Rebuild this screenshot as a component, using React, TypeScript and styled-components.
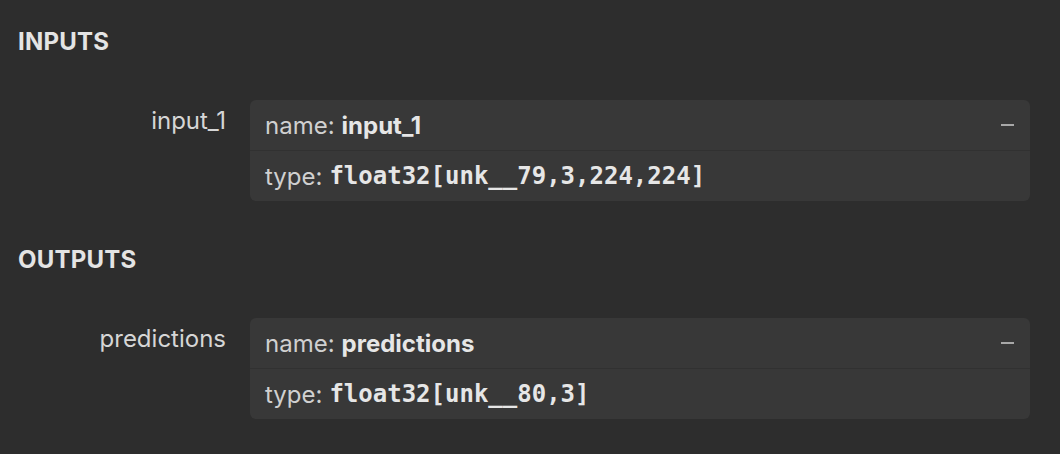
import styled, { createGlobalStyle } from "styled-components"

const GlobalStyle = createGlobalStyle`
	html, body {
		margin: 0;
		padding: 0;
		background: #2d2d2d;
	}
	body {
		font-family: Inter, "Noto Sans", sans-serif;
		color: #dcdcdc;
	}
`

const Sidebar = styled.div`
	width: 1060px;
	height: 454px;
	box-sizing: border-box;
	padding: 28px 30px 0 18px;
	background: #2d2d2d;
`

const SectionTitle = styled.h2`
	margin: 0;
	font-size: 24px;
	font-weight: 700;
	line-height: 28px;
	letter-spacing: 0.2px;
	color: #e4e4e4;
`

const Section = styled.section`
	margin-bottom: 45px;
`

const Row = styled.div`
	display: grid;
	grid-template-columns: 208px 1fr;
	column-gap: 24px;
	margin-top: 44px;
`

const Label = styled.div`
	text-align: right;
	font-size: 24px;
	line-height: 50px;
	color: #d6d6d6;
	margin-top: -4px;
`

const Card = styled.div`
	background: #383838;
	border-radius: 6px;
	overflow: hidden;
`

const Line = styled.div<{ $first?: boolean }>`
	display: flex;
	align-items: center;
	height: 50px;
	padding: 0 15px;
	font-size: 24px;
	color: #d0d0d0;
	border-top: ${(p) => (p.$first ? "none" : "1px solid #313131")};
`

const Key = styled.span`
	margin-right: 7px;
`

const Value = styled.span`
	font-weight: 700;
	color: #e6e6e6;
`

const Mono = styled.span`
	font-family: "DejaVu Sans Mono", monospace;
	font-weight: 700;
	font-size: 24px;
	color: #e6e6e6;
`

const Collapse = styled.span`
	margin-left: auto;
	width: 13px;
	height: 2px;
	background: #a8a8a8;
	margin-right: 1px;
`

type Arg = { label: string; name: string; type: string }

const Argument = ({ arg }: { arg: Arg }) => (
	<Row>
		<Label>{arg.label}</Label>
		<Card>
			<Line $first>
				<Key>name:</Key>
				<Value>{arg.name}</Value>
				<Collapse />
			</Line>
			<Line>
				<Key>type:</Key>
				<Mono>{arg.type}</Mono>
			</Line>
		</Card>
	</Row>
)

const sections = [
	{
		title: "INPUTS",
		args: [{ label: "input_1", name: "input_1", type: "float32[unk__79,3,224,224]" }],
	},
	{
		title: "OUTPUTS",
		args: [{ label: "predictions", name: "predictions", type: "float32[unk__80,3]" }],
	},
]

export default function App() {
	return (
		<>
			<GlobalStyle />
			<Sidebar>
				{sections.map((s) => (
					<Section key={s.title}>
						<SectionTitle>{s.title}</SectionTitle>
						{s.args.map((a) => (
							<Argument key={a.label} arg={a} />
						))}
					</Section>
				))}
			</Sidebar>
		</>
	)
}
